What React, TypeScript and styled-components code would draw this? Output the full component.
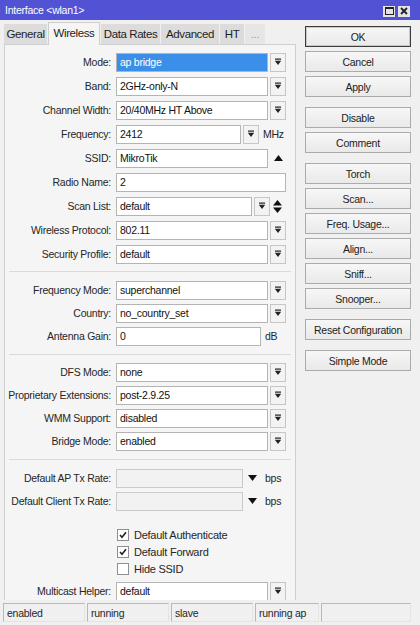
import styled, { createGlobalStyle } from 'styled-components';

const GlobalStyle = createGlobalStyle`
  html, body {
    margin: 0;
    padding: 0;
  }
  body {
    font-family: "Liberation Sans", Arial, sans-serif;
    font-size: 10.5px;
    letter-spacing: -0.25px;
    color: #1e1e1e;
    background: #f0f0f0;
  }
  * {
    box-sizing: border-box;
  }
`;

const Window = styled.div`
  width: 420px;
  height: 625px;
  display: flex;
  flex-direction: column;
  background: #f0f0f0;
  overflow: hidden;
`;

const TitleBar = styled.div`
  height: 20px;
  flex: none;
  background: #5252d4;
  color: #fff;
  display: flex;
  align-items: center;
  padding: 0 10px 0 5px;
  font-size: 10.5px;
`;

const Title = styled.span`
  flex: 1;
`;

const TitleButton = styled.div`
  width: 12px;
  height: 11px;
  margin-left: 3px;
  margin-top: 2px;
  background: #e4e4e4;
  display: flex;
  align-items: center;
  justify-content: center;
`;

const Main = styled.div`
  flex: 1;
  display: flex;
  padding-left: 4px;
  min-height: 0;
`;

const LeftCol = styled.div`
  width: 292px;
  display: flex;
  flex-direction: column;
`;

const TabBar = styled.div`
  display: flex;
  align-items: flex-end;
  height: 22px;
  margin-top: 2px;
  position: relative;
  z-index: 1;
`;

const Tab = styled.div<{ $w: number; $active?: boolean; $muted?: boolean }>`
  width: ${p => p.$w}px;
  height: ${p => (p.$active ? 23 : 20)}px;
  margin-bottom: ${p => (p.$active ? -1 : 0)}px;
  margin-right: 1px;
  display: flex;
  align-items: center;
  justify-content: center;
  font-size: 11.5px;
  letter-spacing: -0.4px;
  padding-bottom: ${p => (p.$active ? 3 : 0)}px;
  color: ${p => (p.$muted ? '#a0a0a0' : '#1e1e1e')};
  background: ${p => (p.$active ? '#f5f5f5' : p.$muted ? '#e6e6e6' : '#dcdcdc')};
  border: ${p => (p.$active ? '1px solid #cfcfcf' : 'none')};
  border-bottom: none;
`;

const Panel = styled.div`
  flex: 1;
  min-height: 0;
  overflow: hidden;
  background: #f5f5f5;
  border: 1px solid #cfcfcf;
  border-bottom: none;
  padding-top: 7px;
`;

const Group = styled.div<{ $gap: number; $top?: number }>`
  display: flex;
  flex-direction: column;
  gap: ${p => p.$gap}px;
  margin-top: ${p => p.$top ?? 0}px;
`;

const Separator = styled.div<{ $top: number; $bottom: number }>`
  height: 1px;
  background: #dadada;
  margin: ${p => p.$top}px 4px ${p => p.$bottom}px 4px;
`;

const Row = styled.div<{ $h?: number }>`
  display: grid;
  grid-template-columns: 106px auto;
  column-gap: 5px;
  align-items: center;
  height: ${p => p.$h ?? 20}px;
`;

const Label = styled.span`
  text-align: right;
  white-space: nowrap;
  color: #262626;
`;

const Field = styled.div`
  display: flex;
  align-items: center;
`;

const Input = styled.div<{ $w: number; $selected?: boolean; $disabled?: boolean }>`
  width: ${p => p.$w}px;
  height: 19px;
  border: 1px solid ${p => (p.$disabled ? '#cacaca' : '#b4b4b4')};
  background: ${p => (p.$selected ? '#3b8fe9' : p.$disabled ? '#f2f2f2' : '#fff')};
  color: ${p => (p.$selected ? '#fff' : '#111')};
  padding: 0 3px;
  display: flex;
  align-items: center;
  white-space: nowrap;
  overflow: hidden;
`;

const DropButton = styled.div`
  width: 16px;
  height: 19px;
  margin-left: 2px;
  border: 1px solid #c6c6c6;
  background: #f3f3f3;
  display: flex;
  align-items: center;
  justify-content: center;
`;

const SideIcon = styled.div<{ $w: number }>`
  width: ${p => p.$w}px;
  display: flex;
  align-items: center;
  justify-content: center;
`;

const Unit = styled.span`
  margin-left: 4px;
  color: #262626;
`;

const CheckLine = styled.div`
  display: flex;
  align-items: center;
  gap: 5px;
  padding-left: 1px;
`;

const Box = styled.div`
  width: 12px;
  height: 12px;
  border: 1px solid #8f8f8f;
  background: #fff;
  display: flex;
  align-items: center;
  justify-content: center;
`;

const CheckText = styled.span`
  font-size: 11px;
  color: #262626;
`;

const RightCol = styled.div`
  width: 106px;
  margin-left: 9px;
  padding-top: 6px;
  display: flex;
  flex-direction: column;
  gap: 4px;
`;

const Button = styled.div<{ $primary?: boolean; $newGroup?: boolean }>`
  height: 21px;
  margin-top: ${p => (p.$newGroup ? 6 : 0)}px;
  border: 1px solid ${p => (p.$primary ? '#3c3c3c' : '#ababab')};
  box-shadow: ${p => (p.$primary ? 'inset 0 0 0 1px #c8c8c8' : 'none')};
  background: linear-gradient(#f7f7f7, #e9e9e9);
  display: flex;
  align-items: center;
  justify-content: center;
  color: #222;
  white-space: nowrap;
`;

const StatusBar = styled.div`
  flex: none;
  height: 19px;
  margin: 3px 9px 3px 3px;
  display: flex;
  gap: 2px;
`;

const StatusCell = styled.div<{ $w?: number }>`
  ${p => (p.$w ? `width: ${p.$w}px;` : 'flex: 1;')}
  border: 1px solid #b8b8b8;
  border-right-color: #e4e4e4;
  border-bottom-color: #e4e4e4;
  padding: 0 3px;
  display: flex;
  align-items: center;
  color: #262626;
`;

const DropIcon = () => (
  <svg width="8" height="8" viewBox="0 0 8 8">
    <rect x="1" y="0.5" width="6" height="1.2" fill="#222" />
    <path d="M0.8 2.8h6.4L4 7z" fill="#222" />
  </svg>
);

const UpIcon = () => (
  <svg width="9" height="6" viewBox="0 0 9 6">
    <path d="M0 6h9L4.5 0z" fill="#111" />
  </svg>
);

const DownIcon = () => (
  <svg width="9" height="6" viewBox="0 0 9 6">
    <path d="M0 0h9L4.5 6z" fill="#111" />
  </svg>
);

const UpDownIcon = () => (
  <svg width="9" height="13" viewBox="0 0 9 13">
    <path d="M0 5.5h9L4.5 0z" fill="#111" />
    <path d="M0 7.5h9L4.5 13z" fill="#111" />
  </svg>
);

const CheckMark = () => (
  <svg width="8" height="8" viewBox="0 0 8 8">
    <path d="M1 4l2 2.3L7 1.2" stroke="#222" strokeWidth="1.6" fill="none" />
  </svg>
);

const SelectRow = ({ label, value, selected }: { label: string; value: string; selected?: boolean }) => (
  <Row>
    <Label>{label}</Label>
    <Field>
      <Input $w={152} $selected={selected}>{value}</Input>
      <DropButton><DropIcon /></DropButton>
    </Field>
  </Row>
);

const TxRateRow = ({ label }: { label: string }) => (
  <Row>
    <Label>{label}</Label>
    <Field>
      <Input $w={127} $disabled />
      <SideIcon $w={18}><DownIcon /></SideIcon>
      <Unit>bps</Unit>
    </Field>
  </Row>
);

const Check = ({ text, checked }: { text: string; checked?: boolean }) => (
  <Row $h={17}>
    <span />
    <CheckLine>
      <Box>{checked && <CheckMark />}</Box>
      <CheckText>{text}</CheckText>
    </CheckLine>
  </Row>
);

const App = () => {
  return (
    <Window>
      <GlobalStyle />
      <TitleBar>
        <Title>Interface &lt;wlan1&gt;</Title>
        <TitleButton>
          <svg width="9" height="8" viewBox="0 0 9 8">
            <rect x="0.5" y="0.5" width="8" height="7" fill="none" stroke="#222" />
            <rect x="0.5" y="0.5" width="8" height="1.5" fill="#222" />
          </svg>
        </TitleButton>
        <TitleButton>
          <svg width="8" height="8" viewBox="0 0 8 8">
            <path d="M1 1l6 6M7 1l-6 6" stroke="#222" strokeWidth="1.8" />
          </svg>
        </TitleButton>
      </TitleBar>

      <Main>
        <LeftCol>
          <TabBar>
            <Tab $w={43}>General</Tab>
            <Tab $w={52} $active>Wireless</Tab>
            <Tab $w={59}>Data Rates</Tab>
            <Tab $w={58}>Advanced</Tab>
            <Tab $w={24}>HT</Tab>
            <Tab $w={20} $muted>...</Tab>
          </TabBar>
          <Panel>
            <Group $gap={4}>
              <SelectRow label="Mode:" value="ap bridge" selected />
              <SelectRow label="Band:" value="2GHz-only-N" />
              <SelectRow label="Channel Width:" value="20/40MHz HT Above" />
              <Row>
                <Label>Frequency:</Label>
                <Field>
                  <Input $w={125}>2412</Input>
                  <DropButton><DropIcon /></DropButton>
                  <Unit>MHz</Unit>
                </Field>
              </Row>
              <Row>
                <Label>SSID:</Label>
                <Field>
                  <Input $w={152}>MikroTik</Input>
                  <SideIcon $w={20}><UpIcon /></SideIcon>
                </Field>
              </Row>
              <Row>
                <Label>Radio Name:</Label>
                <Field>
                  <Input $w={170}>2</Input>
                </Field>
              </Row>
              <Row>
                <Label>Scan List:</Label>
                <Field>
                  <Input $w={136}>default</Input>
                  <DropButton><DropIcon /></DropButton>
                  <SideIcon $w={14}><UpDownIcon /></SideIcon>
                </Field>
              </Row>
              <SelectRow label="Wireless Protocol:" value="802.11" />
              <SelectRow label="Security Profile:" value="default" />
            </Group>

            <Separator $top={7} $bottom={8} />

            <Group $gap={3}>
              <SelectRow label="Frequency Mode:" value="superchannel" />
              <SelectRow label="Country:" value="no_country_set" />
              <Row>
                <Label>Antenna Gain:</Label>
                <Field>
                  <Input $w={145}>0</Input>
                  <Unit>dB</Unit>
                </Field>
              </Row>
            </Group>

            <Separator $top={8} $bottom={7} />

            <Group $gap={3}>
              <SelectRow label="DFS Mode:" value="none" />
              <SelectRow label="Proprietary Extensions:" value="post-2.9.25" />
              <SelectRow label="WMM Support:" value="disabled" />
              <SelectRow label="Bridge Mode:" value="enabled" />
            </Group>

            <Separator $top={8} $bottom={8} />

            <Group $gap={3}>
              <TxRateRow label="Default AP Tx Rate:" />
              <TxRateRow label="Default Client Tx Rate:" />
            </Group>

            <Group $gap={0} $top={15}>
              <Check text="Default Authenticate" checked />
              <Check text="Default Forward" checked />
              <Check text="Hide SSID" />
            </Group>

            <Group $gap={0} $top={4}>
              <SelectRow label="Multicast Helper:" value="default" />
            </Group>
          </Panel>
        </LeftCol>

        <RightCol>
          <Button $primary>OK</Button>
          <Button>Cancel</Button>
          <Button>Apply</Button>
          <Button $newGroup>Disable</Button>
          <Button>Comment</Button>
          <Button $newGroup>Torch</Button>
          <Button>Scan...</Button>
          <Button>Freq. Usage...</Button>
          <Button>Align...</Button>
          <Button>Sniff...</Button>
          <Button>Snooper...</Button>
          <Button $newGroup>Reset Configuration</Button>
          <Button $newGroup>Simple Mode</Button>
        </RightCol>
      </Main>

      <StatusBar>
        <StatusCell $w={82}>enabled</StatusCell>
        <StatusCell $w={82}>running</StatusCell>
        <StatusCell $w={82}>slave</StatusCell>
        <StatusCell $w={64}>running ap</StatusCell>
        <StatusCell />
      </StatusBar>
    </Window>
  );
};

export default App;
